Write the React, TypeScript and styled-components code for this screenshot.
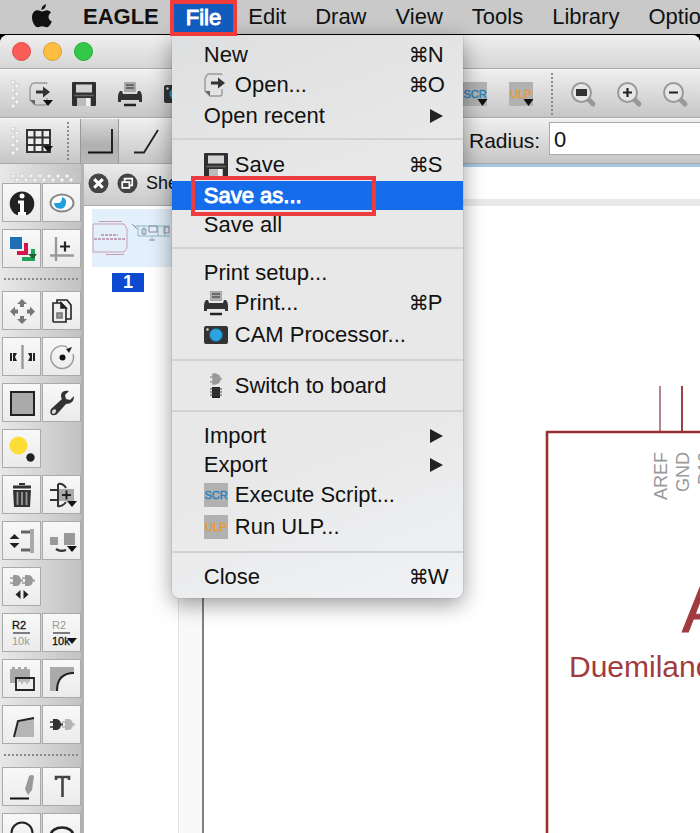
import React from "react";
import styled, { createGlobalStyle, css } from "styled-components";

const GlobalStyle = createGlobalStyle`
  * { box-sizing: border-box; }
  body {
    margin: 0;
    background: #fff;
    font-family: "Liberation Sans", Arial, sans-serif;
    color: #111;
    overflow: hidden;
  }
  button { font: inherit; color: inherit; border: 0; padding: 0; background: none; }
  svg { display: block; }
`;

/* ---------- icons, all on a 24 unit grid ---------- */

const DropArrow = () => <path d="M14.500 17h10l-5 7z" fill="#111" />;

const Plug = ({ fill }: { fill: string }) => (
  <>
    <path d="M3 0h3q4 0 5 4.500h2v2h-2q-1 4.500-5 4.500h-3z" fill={fill} />
    <path d="M0 3h3M0 8h3" stroke={fill} strokeWidth="1.600" />
  </>
);

const ICONS: Record<string, React.ReactNode> = {
  open: (
    <>
      <path d="M18 2q0-1-1-1H5Q3 1 2 3.500L1 6v12l5 5h6M18 16v5q0 2-2 2h-4" fill="none" stroke="#999" strokeWidth="1.400" />
      <path d="M1 18l5 5v-5z" fill="#666" />
      <path d="M7 8.500h7V4.500l7 5.500-7 5.500v-4H7z" fill="#333" />
    </>
  ),
  save: (
    <>
      <path d="M1 0h22q1 0 1 1v22q0 1-1 1H1q-1 0-1-1V1q0-1 1-1z" fill="#2f2f2f" />
      <path d="M4 2.500h16v8H4z" fill="#d4d4d4" />
      <path d="M2.500 13.500h19" stroke="#666" strokeWidth="1.500" />
      <path d="M5 16h14v8H5z" fill="#bbb" />
      <path d="M14 16h4v8h-4z" fill="#eee" />
    </>
  ),
  print: (
    <>
      <path d="M6 0h12v10H6z" fill="#aaa" />
      <path d="M8 3h8M8 6h8" stroke="#555" strokeWidth="1.500" />
      <path d="M2 9h2l1 3h14l1-3h2q2 2 2 5v6h-3v-2H3v2H0v-6q0-3 2-5z" fill="#333" />
      <path d="M6 23h12" stroke="#222" strokeWidth="2.500" />
    </>
  ),
  cam: (
    <>
      <rect x="0" y="3" width="24" height="18" rx="2" fill="#333" />
      <circle cx="12" cy="12" r="6.500" fill="#2ba3e2" stroke="#1c5f80" strokeWidth="1" />
      <circle cx="3.500" cy="6.500" r="1.200" fill="#ddd" />
    </>
  ),
  board: (
    <>
      <path d="M9 0h2q5 1 5 5t-5 5H9zM6 3h3M6 8h3M16 5h2" fill="#999" stroke="#999" strokeWidth="1.500" />
      <path d="M8 13h8v11H8z" fill="#222" />
      <path d="M6 15h12M6 18h12M6 21h12" stroke="#444" strokeWidth="1.200" />
    </>
  ),
  scr: (
    <>
      <path d="M0 0h24v24H0z" fill="#b1b1b1" />
      <text x="12" y="16" textAnchor="middle" fontSize="11" fill="#2380bd" stroke="#2380bd" strokeWidth="0.400">SCR</text>
    </>
  ),
  ulp: (
    <>
      <path d="M0 0h24v24H0z" fill="#b1b1b1" />
      <text x="12" y="16" textAnchor="middle" fontSize="11" fill="#ec9a2c" stroke="#ec9a2c" strokeWidth="0.400">ULP</text>
    </>
  ),
  zoomFit: (
    <>
      <path d="M17 17l5 5" stroke="#999" strokeWidth="5" strokeLinecap="round" />
      <circle cx="10.500" cy="10.500" r="9.500" fill="#e6e6e6" stroke="#999" strokeWidth="2" />
      <path d="M5 7h11v7H5z" fill="#333" />
    </>
  ),
  zoomIn: (
    <>
      <path d="M17 17l5 5" stroke="#999" strokeWidth="5" strokeLinecap="round" />
      <circle cx="10.500" cy="10.500" r="9.500" fill="#e6e6e6" stroke="#999" strokeWidth="2" />
      <path d="M6 10.500h9M10.500 6v9" stroke="#222" strokeWidth="2.200" />
    </>
  ),
  zoomOut: (
    <>
      <path d="M17 17l5 5" stroke="#999" strokeWidth="5" strokeLinecap="round" />
      <circle cx="10.500" cy="10.500" r="9.500" fill="#e6e6e6" stroke="#999" strokeWidth="2" />
      <path d="M6 10.500h9" stroke="#222" strokeWidth="2.200" />
    </>
  ),
  grid: (
    <>
      <path d="M1 1h23v22H1zM1 8.500h23M1 16h23M8.500 1v22M16.500 1v22" fill="#eee" stroke="#333" strokeWidth="2" />
      <path d="M17 17h10l-5 6z" fill="#111" />
    </>
  ),
  bendCorner: <path d="M0 23.500h24V0" fill="none" stroke="#111" strokeWidth="1.800" />,
  bendSlant: <path d="M0 23.500h10L24 1" fill="none" stroke="#222" strokeWidth="1.800" />,
  info: (
    <>
      <path d="M7 24A12.300 12.300 0 1 1 17 24z" fill="#222" />
      <circle cx="12" cy="5" r="2.500" fill="#fff" />
      <path d="M8 9.500h6V21h2v3H8v-3h2v-8.500H8z" fill="#fff" />
    </>
  ),
  show: (
    <>
      <ellipse cx="12" cy="12" rx="11.500" ry="8.500" fill="#fff" stroke="#888" strokeWidth="2" />
      <path d="M12 6a6 6 0 1 1-8 6h4q4 0 4-6z" fill="#22a0dd" />
    </>
  ),
  layers: (
    <>
      <path d="M0 0h12v12H0z" fill="#1f6fb8" />
      <path d="M14 6h4v12H7v-4h7z" fill="#d5144f" />
      <path d="M21 12h4v12H12v-4h9z" fill="#25a35a" />
      <path d="M18 17h9l-4 5z" fill="#1a5f36" />
    </>
  ),
  mark: (
    <>
      <path d="M6 0v24M0 18.500h24" stroke="#999" strokeWidth="2.400" />
      <path d="M10 9.500h10M15 4.500v10" stroke="#222" strokeWidth="2.200" />
    </>
  ),
  move: (
    <path
      d="M12 0l5 5h-3v3h-4V5H7zM12 25l5-5h-3v-3h-4v3H7zM0 12.500l5-5v3h3v4H5v3zM25 12.500l-5-5v3h-3v4h3v3z"
      fill="#777"
    />
  ),
  copy: (
    <g fill="#eee" stroke="#222" strokeWidth="1.600">
      <path d="M7 1h10l4 5v14H7z" />
      <path d="M3 4h8l5 5v14H4q-1 0-1-1z" />
      <path d="M11 4v5h5z" fill="#222" />
      <path d="M7 14h5v5H7z" fill="#999" stroke="#777" />
    </g>
  ),
  mirror: (
    <>
      <path d="M12.500 0v24" stroke="#999" strokeWidth="2.400" />
      <path d="M0 8h2v8H0zM3 8h4l-2 4 2 4H3zM23 8h2v8h-2zM22 8h-4l2 4-2 4h4z" fill="#222" />
    </>
  ),
  rotate: (
    <>
      <path d="M17 2A11.300 11.300 0 1 0 23 9" fill="none" stroke="#999" strokeWidth="1.400" />
      <circle cx="12.500" cy="12.500" r="3" fill="#111" />
      <path d="M16 4l6-2-3 6z" fill="#222" />
    </>
  ),
  group: <path d="M1 1h23v23H1z" fill="#aaa" stroke="#222" strokeWidth="2" />,
  change: (
    <>
      <path d="M19 0q-7-1-8 4 0 3 1 4L1 18q-2 4 1 6 4 1 6-2l8-9q8 0 8-8l-4 4-4-1-1-4z" fill="#333" />
      <ellipse cx="4" cy="20.500" rx="1.800" ry="2.500" transform="rotate(40 4 20.500)" fill="#ddd" />
    </>
  ),
  paste: (
    <>
      <circle cx="8.500" cy="8.500" r="9" fill="#fddc36" />
      <circle cx="20.500" cy="20.500" r="4.200" fill="#222" />
    </>
  ),
  trash: (
    <>
      <path d="M3 2.500h18v3H3zM9 0h6v2H9z" fill="#333" />
      <path d="M3 7h18l-1 17H4z" fill="#333" />
      <path d="M7.500 9v13M12 9v13M16.500 9v13" stroke="#999" strokeWidth="1.800" />
    </>
  ),
  add: (
    <>
      <path d="M0 7h8M0 17h8M8 1v22q4 1 8-4M8 1q5-1 8 4" fill="none" stroke="#333" strokeWidth="2" />
      <path d="M9 6h15v12H9z" fill="#aaa" />
      <path d="M12 12h9M16.500 7.500v9" stroke="#222" strokeWidth="2" />
      <path d="M17 18h10l-5 6z" fill="#111" />
    </>
  ),
  pinswap: (
    <>
      <path d="M20 0h4v24h-4z" fill="#aaa" />
      <path d="M11 3h9M11 21h9" stroke="#666" strokeWidth="3" />
      <path d="M4.500 5l5 5h-10zM4.500 19l5-5h-10zM0 11.800h9" fill="#222" />
    </>
  ),
  replace: (
    <>
      <path d="M0 8h8v8H0zM14 4h11v12H14z" fill="#999" />
      <path d="M6 20q4 3 10 1" fill="none" stroke="#333" strokeWidth="2.200" />
      <path d="M17 17h10l-5 6z" fill="#111" />
    </>
  ),
  gateswap: (
    <>
      <Plug fill="#999" />
      <g transform="translate(12 0)"><Plug fill="#999" /></g>
      <path d="M10.500 15v9l-5-4.500zM13.500 15v9l5-4.500z" fill="#222" />
    </>
  ),
  name: (
    <>
      <text x="2" y="8" fontSize="11" fill="#111" stroke="#111" strokeWidth="0.300">R2</text>
      <path d="M3 12h17" stroke="#555" strokeWidth="1.500" />
      <text x="2" y="24" fontSize="11" fill="#999">10k</text>
    </>
  ),
  value: (
    <>
      <text x="2" y="8" fontSize="11" fill="#999">R2</text>
      <path d="M3 12h17" stroke="#555" strokeWidth="1.500" />
      <text x="2" y="24" fontSize="11" fill="#111" stroke="#111" strokeWidth="0.300">10k</text>
      <path d="M17 17h10l-5 6z" fill="#111" />
    </>
  ),
  smash: (
    <>
      <path d="M0 2h2V0h3v2h3V0h3v2h3V0h3v2h3v14H0z" fill="#aaa" />
      <path d="M6 11h18v12H6z" fill="#eee" stroke="#222" strokeWidth="1.800" />
      <path d="M8 12h12v3h-2v2h-2v-2h-3v2h-2v-2H8z" fill="#bbb" />
    </>
  ),
  miter: (
    <>
      <path d="M0 0h24v6q-17 0-17 18H0z" fill="#aaa" />
      <path d="M24 6Q7 6 7 24" fill="none" stroke="#222" strokeWidth="2" />
    </>
  ),
  split: (
    <>
      <path d="M5 24L9 8l15-3v19z" fill="#b5b5b5" />
      <path d="M4 24L8 8l16-3" fill="none" stroke="#222" strokeWidth="2" />
    </>
  ),
  invoke: (
    <>
      <g transform="translate(12 6)"><Plug fill="#b5b5b5" /></g>
      <g transform="translate(0 6)"><Plug fill="#333" /></g>
    </>
  ),
  wire: (
    <>
      <path d="M0 23.500h19" stroke="#111" strokeWidth="2" />
      <path d="M19 1q3-2 5 0l-2 14-4 5-3-6z" fill="#999" />
    </>
  ),
  text: <path d="M6 5V2h13v3M12.500 2v20" fill="none" stroke="#444" strokeWidth="2.600" />,
  circle: <circle cx="12" cy="12" r="10.500" fill="none" stroke="#222" strokeWidth="2" />,
  arc: <ellipse cx="12" cy="14" rx="11" ry="7.500" fill="none" stroke="#222" strokeWidth="2.600" />,
};

const IconSvg = styled.svg`
  flex: none;
  width: 24px;
  height: 24px;
  overflow: visible;
  font-family: "Liberation Sans", Arial, sans-serif;
`;

const Icon = ({ name, drop }: { name: string; drop?: boolean }) => (
  <IconSvg viewBox="0 0 24 24" aria-hidden="true">
    {ICONS[name]}
    {drop && <DropArrow />}
  </IconSvg>
);

/* ---------- system menu bar ---------- */

const Page = styled.div`
  display: flex;
  flex-direction: column;
  height: 100vh;
  overflow: hidden;
  background: #000;
`;

const MenuBar = styled.nav`
  position: relative;
  z-index: 2;
  flex: none;
  display: flex;
  align-items: center;
  gap: 1px;
  height: 34px;
  padding-left: 31px;
  margin-bottom: 1px;
  background: #c9c9c9;
  font-size: 22px;
  line-height: 34px;
  white-space: nowrap;
`;

const AppleLogo = styled.svg`
  flex: none;
  width: 22px;
  height: 26px;
  margin: 0 15px 3px 0;
`;

const MenuTitle = styled.button<{ $strong?: boolean }>`
  flex: none;
  height: 34px;
  padding: 0 14px;
  font-weight: ${(p) => (p.$strong ? 700 : 400)};
`;

const OpenMenu = styled.div`
  position: relative;
  flex: none;
  height: 34px;
  margin: 0 -4px;
`;

const OpenTitle = styled.button`
  position: relative;
  z-index: 2;
  height: 36px;
  padding: 0 12px;
  border: 4px solid #f23c3c;
  background: #115bbd;
  color: #fff;
  line-height: 26px;
  -webkit-text-stroke: 1px #fff;
`;

const Dropdown = styled.div`
  position: absolute;
  top: 35px;
  left: 2px;
  width: 291px;
  padding: 5px 0 7px;
  border-radius: 0 0 8px 8px;
  background: linear-gradient(160deg, #dedfe0 0, #e8e8e8 30%, #e8e8e8 70%, #f0f2f5 100%);
  box-shadow: 0 6px 22px rgba(0, 0, 0, 0.4), 0 0 1px rgba(0, 0, 0, 0.5);
`;

const Entry = styled.button<{ $icon: boolean; $active: boolean }>`
  position: relative;
  display: flex;
  align-items: center;
  gap: 7px;
  width: 100%;
  height: ${(p) => (p.$icon ? 32 : 29)}px;
  padding: 0 12px 0 32px;
  line-height: 28px;
  text-align: left;
  ${(p) =>
    p.$active &&
    css`
      z-index: 1;
      background: #156deb;
      color: #fff;
      -webkit-text-stroke: 1px #fff;
    `}
`;

const EntryLabel = styled.span`
  flex: 1;
`;

const Shortcut = styled.span`
  display: flex;
  align-items: center;
  width: 42px;
`;

const CommandKey = styled.span`
  width: 19px;
  font-family: "DejaVu Sans", sans-serif;
  font-size: 20px;
`;

const SubmenuArrow = styled.svg`
  width: 13px;
  height: 16px;
  margin-right: 8px;
  fill: #222;
`;

const Divider = styled.div`
  height: 19px;
  padding: 8px 0;
  &::after {
    content: "";
    display: block;
    height: 2px;
    background: #d2d2d2;
  }
`;

const Highlight = styled.span`
  position: absolute;
  top: -5px;
  left: 19px;
  width: 185px;
  height: 40px;
  border: 4px solid #ec3c40;
`;

type MenuEntry = { label: string; icon?: string; key?: string; sub?: boolean; active?: boolean } | null;

const FILE_MENU: MenuEntry[] = [
  { label: "New", key: "N" },
  { label: "Open...", icon: "open", key: "O" },
  { label: "Open recent", sub: true },
  null,
  { label: "Save", icon: "save", key: "S" },
  { label: "Save as...", active: true },
  { label: "Save all" },
  null,
  { label: "Print setup..." },
  { label: "Print...", icon: "print", key: "P" },
  { label: "CAM Processor...", icon: "cam" },
  null,
  { label: "Switch to board", icon: "board" },
  null,
  { label: "Import", sub: true },
  { label: "Export", sub: true },
  { label: "Execute Script...", icon: "scr" },
  { label: "Run ULP...", icon: "ulp" },
  null,
  { label: "Close", key: "W" },
];

const FileMenu = () => (
  <OpenMenu>
    <OpenTitle aria-expanded="true">File</OpenTitle>
    <Dropdown role="menu">
      {FILE_MENU.map((e, i) =>
        e === null ? (
          <Divider key={i} role="separator" />
        ) : (
          <Entry key={i} role="menuitem" $icon={!!e.icon} $active={!!e.active}>
            {e.icon && <Icon name={e.icon} />}
            <EntryLabel>{e.label}</EntryLabel>
            {e.key && (
              <Shortcut>
                <CommandKey>⌘</CommandKey>
                {e.key}
              </Shortcut>
            )}
            {e.sub && (
              <SubmenuArrow viewBox="0 0 13 16">
                <path d="M0 1l13 7-13 7z" />
              </SubmenuArrow>
            )}
            {e.active && <Highlight />}
          </Entry>
        )
      )}
    </Dropdown>
  </OpenMenu>
);

/* ---------- window chrome ---------- */

const Window = styled.div`
  flex: 1;
  display: flex;
  flex-direction: column;
  min-height: 0;
  border-radius: 8px 8px 0 0;
  overflow: hidden;
  background: #fff;
`;

const TitleBar = styled.header`
  flex: none;
  display: flex;
  align-items: center;
  gap: 12px;
  height: 34px;
  padding-left: 12px;
  background: linear-gradient(#efefef, #d6d6d6);
  border-bottom: 1px solid #a9a9a9;
`;

const Light = styled.button<{ $fill: string; $edge: string }>`
  width: 19px;
  height: 19px;
  border-radius: 50%;
  border: 1px solid ${(p) => p.$edge};
  background: ${(p) => p.$fill};
`;

const Toolbar = styled.div<{ $short?: boolean }>`
  flex: none;
  display: flex;
  align-items: center;
  height: ${(p) => (p.$short ? 46 : 49)}px;
  padding-left: 11px;
  background: linear-gradient(#efefef, #c6c6c6);
  border-top: 1px solid #f8f8f8;
  border-bottom: 1px solid #a9a9a9;
  overflow: hidden;
`;

const Grip = styled.div`
  flex: none;
  width: 9px;
  height: 28px;
  margin-right: 6px;
  background:
    radial-gradient(circle at 2px 2px, #f6f6f6 0 1px, #cdcdcd 2px, transparent 3px) 0 0 / 9px 8px,
    radial-gradient(circle at 6px 6px, #f6f6f6 0 1px, #cdcdcd 2px, transparent 3px) 0 0 / 9px 8px;
`;

const ToolButton = styled.button`
  flex: none;
  width: 24px;
  height: 24px;
  margin-right: 22px;
`;

const SheetSelect = styled.select`
  flex: none;
  width: 185px;
  height: 26px;
  margin-right: 22px;
`;

const DottedRule = styled.div`
  flex: none;
  width: 2px;
  align-self: stretch;
  margin: 3px 0 2px;
  background: repeating-linear-gradient(#8a8a8a 0 2px, transparent 2px 4px);
`;

const ZoomGroup = styled.div`
  display: flex;
  padding-left: 18px;
`;

const Slot = styled.div<{ $width: number }>`
  flex: none;
  display: flex;
  width: ${(p) => p.$width}px;
`;

const BendGroup = styled.div`
  display: flex;
  align-self: stretch;
  gap: 7px;
  margin: 0 28px 0 11px;
`;

const BendButton = styled.button<{ $on?: boolean }>`
  display: grid;
  place-items: center;
  width: 39px;
  border: solid transparent;
  border-width: 0 1px;
  ${(p) =>
    p.$on &&
    css`
      background: linear-gradient(#dadada, #b0b0b0 60%, #b8b8b8);
      border-color: #999;
    `}
`;

const RadiusLabel = styled.label`
  flex: none;
  width: 80px;
  font-size: 21px;
`;

const RadiusInput = styled.input`
  flex: 1;
  min-width: 151px;
  height: 33px;
  margin-bottom: 5px;
  padding: 2px 4px 0;
  border: 1px solid #aaa;
  border-right: 0;
  background: #fff;
  color: #111;
  font: 22px "Liberation Sans", Arial, sans-serif;
  outline: 0;
`;

/* ---------- body ---------- */

const Body = styled.div`
  flex: 1;
  display: flex;
  min-height: 0;
`;

const Palette = styled.aside`
  flex: none;
  display: flex;
  flex-direction: column;
  gap: 7px;
  width: 84px;
  padding: 10px 0 0 2px;
  background: linear-gradient(90deg, #e8e8e8, #c2c2c2);
  border-right: 3px solid #b3b3b3;
  overflow: hidden;
`;

const PaletteGrip = styled.div`
  flex: none;
  height: 8px;
  margin: 0 6px -6px 9px;
  background:
    radial-gradient(circle at 2px 2px, #f6f6f6 0 1px, #cdcdcd 2px, transparent 3px) 0 0 / 9px 8px,
    radial-gradient(circle at 6px 6px, #f6f6f6 0 1px, #cdcdcd 2px, transparent 3px) 0 0 / 9px 8px;
`;

const PaletteRow = styled.div`
  flex: none;
  display: flex;
  gap: 1px;
`;

const PaletteButton = styled.button`
  display: grid;
  place-items: center;
  width: 39px;
  height: 39px;
  border: 1px solid #aaa;
  background: linear-gradient(#f8f8f8, #ebebeb);
`;

const PaletteRule = styled.div`
  flex: none;
  height: 9px;
  padding-top: 3px;
  margin: 0 2px;
  &::after {
    content: "";
    display: block;
    height: 2px;
    background: repeating-linear-gradient(90deg, #8a8a8a 0 2px, transparent 2px 4px);
  }
`;

const PALETTE: (string[] | null)[] = [
  ["info", "show"],
  ["layers", "mark"],
  null,
  ["move", "copy"],
  ["mirror", "rotate"],
  ["group", "change"],
  ["paste"],
  ["trash", "add"],
  ["pinswap", "replace"],
  ["gateswap"],
  ["name", "value"],
  ["smash", "miter"],
  ["split", "invoke"],
  null,
  ["wire", "text"],
  ["circle", "arc"],
];

const Sheets = styled.section`
  flex: none;
  display: flex;
  flex-direction: column;
  width: 120px;
  border-right: 2px solid #808080;
`;

const SheetsHeader = styled.div`
  display: flex;
  align-items: center;
  gap: 8px;
  height: 42px;
  padding: 0 0 3px 4px;
  background: linear-gradient(#ebebeb, #c9c9c9);
  border-bottom: 1px solid #a9a9a9;
  font-size: 18px;
`;

const RoundButton = styled.button`
  width: 22px;
  height: 22px;
`;

const SheetsBody = styled.div`
  flex: 1;
  display: flex;
  justify-content: space-between;
`;

const SheetItem = styled.figure`
  display: flex;
  flex-direction: column;
  align-items: center;
  gap: 6px;
  width: 80px;
  margin: 3px 0 0 8px;
`;

const Thumb = styled.svg`
  width: 80px;
  height: 58px;
  background: #e3effb;
`;

const SheetNumber = styled.figcaption`
  width: 32px;
  height: 19px;
  margin-right: 8px;
  background: #0c4bd0;
  color: #fff;
  font-size: 18px;
  font-weight: 700;
  line-height: 19px;
  text-align: center;
`;

const ScrollTrack = styled.div`
  width: 24px;
  background: #f9f9f9;
  border-left: 1px solid #e4e4e4;
`;

const Editor = styled.main`
  flex: 1;
  display: flex;
  flex-direction: column;
  min-width: 0;
`;

const CommandLine = styled.input`
  flex: none;
  width: 100%;
  height: 35px;
  border: 0;
  border-top: 3px solid #a5c8e4;
  background: #fff;
  font: 18px "Liberation Sans", Arial, sans-serif;
  outline: 0;
`;

const Ruler = styled.div`
  flex: none;
  height: 7px;
  background: #e9e9e9;
`;

const Schematic = styled.svg`
  flex: 1;
  width: 100%;
  min-height: 0;
  font-family: "Liberation Sans", Arial, sans-serif;
`;

export default function App() {
  return (
    <Page>
      <GlobalStyle />
      <MenuBar>
        <AppleLogo viewBox="0 0 22 26" aria-label="Apple">
          <path
            d="M15 1q0 5-4.500 6Q10 3 15 1zM11 8.500c2 0 3-1.500 5-1.300 1.700.1 3 .9 4 2.200-3.700 2.500-3 7.500.8 9-1 2.700-3 5.900-5.300 5.900-1.600 0-2.200-1-4.300-1s-2.700 1-4.200 1C4 24.300 1 19 1 14.500 1 10 3.500 7.300 6.500 7.300c1.800 0 3 1.200 4.500 1.200z"
            fill="#111"
          />
        </AppleLogo>
        <MenuTitle $strong>EAGLE</MenuTitle>
        <FileMenu />
        {["Edit", "Draw", "View", "Tools", "Library", "Options"].map((t) => (
          <MenuTitle key={t}>{t}</MenuTitle>
        ))}
      </MenuBar>

      <Window>
        <TitleBar>
          <Light $fill="#fc5c58" $edge="#dd4b47" aria-label="Close window" />
          <Light $fill="#fdbd41" $edge="#dd9f33" aria-label="Minimize" />
          <Light $fill="#34c84a" $edge="#27a93a" aria-label="Zoom" />
        </TitleBar>

        <Toolbar>
          <Grip />
          <ToolButton aria-label="Open">
            <IconSvg viewBox="-3 0 24 24" aria-hidden="true">
              {ICONS.open}
              <path d="M14 18h10l-5 6z" fill="#111" />
            </IconSvg>
          </ToolButton>
          <ToolButton aria-label="Save"><Icon name="save" /></ToolButton>
          <ToolButton aria-label="Print"><Icon name="print" /></ToolButton>
          <ToolButton aria-label="CAM Processor"><Icon name="cam" /></ToolButton>
          <ToolButton aria-label="Switch to board"><Icon name="board" /></ToolButton>
          <SheetSelect aria-label="Sheet" defaultValue="1"><option>1</option></SheetSelect>
          <ToolButton aria-label="Execute script"><Icon name="scr" drop /></ToolButton>
          <Slot $width={42}>
            <ToolButton aria-label="Run ULP"><Icon name="ulp" drop /></ToolButton>
          </Slot>
          <DottedRule />
          <ZoomGroup>
            <ToolButton aria-label="Fit"><Icon name="zoomFit" /></ToolButton>
            <ToolButton aria-label="Zoom in"><Icon name="zoomIn" /></ToolButton>
            <ToolButton aria-label="Zoom out"><Icon name="zoomOut" /></ToolButton>
          </ZoomGroup>
        </Toolbar>

        <Toolbar $short>
          <Grip />
          <Slot $width={41}>
            <ToolButton aria-label="Grid"><Icon name="grid" /></ToolButton>
          </Slot>
          <DottedRule />
          <BendGroup>
            {[0, 1, 2, 3, 4, 5, 6, 7].map((n) => (
              <BendButton key={n} $on={n === 0} aria-label={`Wire bend ${n}`}>
                <Icon name={n % 2 ? "bendSlant" : "bendCorner"} />
              </BendButton>
            ))}
          </BendGroup>
          <RadiusLabel htmlFor="radius">Radius:</RadiusLabel>
          <RadiusInput id="radius" defaultValue="0" />
        </Toolbar>

        <Body>
          <Palette>
            <PaletteGrip />
            {PALETTE.map((row, i) =>
              row ? (
                <PaletteRow key={i}>
                  {row.map((name) => (
                    <PaletteButton key={name} aria-label={name}><Icon name={name} /></PaletteButton>
                  ))}
                </PaletteRow>
              ) : (
                <PaletteRule key={i} />
              )
            )}
          </Palette>

          <Sheets>
            <SheetsHeader>
              <RoundButton aria-label="Close panel">
                <svg viewBox="0 0 22 22">
                  <circle cx="11" cy="11" r="10.500" fill="#444" />
                  <path d="M6.500 6.500l9 9M15.500 6.500l-9 9" stroke="#fff" strokeWidth="3.200" />
                </svg>
              </RoundButton>
              <RoundButton aria-label="Detach panel">
                <svg viewBox="0 0 22 22">
                  <circle cx="11" cy="11" r="10.500" fill="#444" />
                  <path d="M8 9V6h8v7h-3M5.500 9.500h7.500v6H5.500z" fill="none" stroke="#fff" strokeWidth="1.800" />
                </svg>
              </RoundButton>
              Sheets
            </SheetsHeader>
            <SheetsBody>
              <SheetItem>
                <Thumb viewBox="0 0 80 58" aria-label="Sheet 1">
                  <g fill="none" stroke="#c79db5" strokeWidth="1">
                    <path d="M1 15h31l3 5v19l-3 4H1zM7 12.500h23M14 45.500h18" />
                    <path d="M9 26h17M2 30h31" stroke="#b98aa5" strokeWidth="1.600" strokeDasharray="3 1" />
                  </g>
                  <g fill="none" stroke="#8fbdb9" strokeWidth="1">
                    <path d="M42 17h36M46 27h32M46 17v10M52 17v10M66 17v10M60 27v5M73 17v10" />
                    <path d="M57 17h8v6h-8zM50 20h4v5h-4zM72 18h5v6h-5zM40 15l5 5M57 31h6" stroke="#8f8aa8" />
                  </g>
                </Thumb>
                <SheetNumber>1</SheetNumber>
              </SheetItem>
              <ScrollTrack />
            </SheetsBody>
          </Sheets>

          <Editor>
            <CommandLine aria-label="Command" />
            <Ruler />
            <Schematic>
              <path d="M456 180v45" stroke="#996068" strokeWidth="1.500" />
              <path d="M478 180v45" stroke="#8b2025" strokeWidth="1.700" />
              <path d="M1200 226H343V900" fill="none" stroke="#983033" strokeWidth="2.600" strokeLinejoin="round" />
              <g fontSize="18" fill="#999" textAnchor="end">
                <text transform="translate(463 246) rotate(-90)">AREF</text>
                <text transform="translate(485 246) rotate(-90)">GND</text>
                <text transform="translate(507 246) rotate(-90)">D13</text>
              </g>
              <g fill="#a03c40">
                <text x="478" y="426" fontSize="64" stroke="#a03c40" strokeWidth="1">Arduino</text>
                <text x="365" y="471" fontSize="30">Duemilanove</text>
              </g>
            </Schematic>
          </Editor>
        </Body>
      </Window>
    </Page>
  );
}
